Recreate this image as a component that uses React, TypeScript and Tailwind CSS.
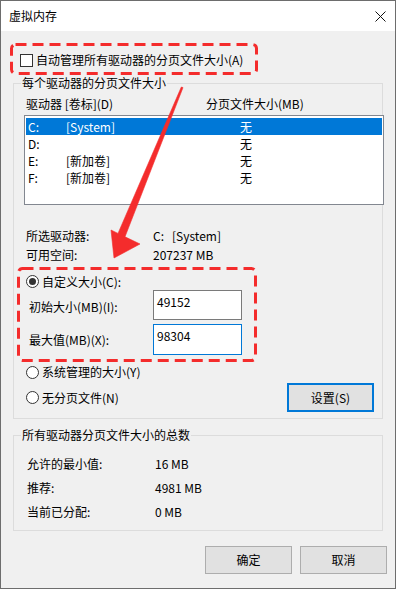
import React from 'react'

const drives = [
  { letter: 'C:', label: '[System]', size: '无', selected: true },
  { letter: 'D:', label: '', size: '无', selected: false },
  { letter: 'E:', label: '[新加卷]', size: '无', selected: false },
  { letter: 'F:', label: '[新加卷]', size: '无', selected: false },
]

function Radio({ checked }: { checked?: boolean }) {
  return (
    <span className="flex h-[13px] w-[13px] shrink-0 items-center justify-center rounded-full border border-[#333] bg-white">
      {checked && <span className="h-[7px] w-[7px] rounded-full bg-[#333]" />}
    </span>
  )
}

function Button({ children, focused }: { children: React.ReactNode; focused?: boolean }) {
  return (
    <div
      className={
        focused
          ? 'flex h-[29px] w-[87px] items-center justify-center border-2 border-[#0078d7] bg-[#e1e1e1]'
          : 'flex h-[28px] w-[87px] items-center justify-center border border-[#adadad] bg-[#e1e1e1]'
      }
    >
      {children}
    </div>
  )
}

function Annotations() {
  // red marks drawn over the dialog
  return (
    <svg className="pointer-events-none absolute left-0 top-0" width="396" height="589">
      <rect x="10.5" y="43.5" width="245" height="29" rx="4" fill="none" stroke="#f42c2c" strokeWidth="3" strokeDasharray="11 6" />
      <rect x="17.5" y="267.5" width="237" height="92" rx="4" fill="none" stroke="#f42c2c" strokeWidth="3" strokeDasharray="11 6" />
      <polygon
        points="180.3,86 182,86.6 124,235.8 139,243 113,257 110,229 117,232.4"
        fill="#f42c2c"
        strokeLinejoin="round"
        stroke="#f42c2c"
        strokeWidth="0.6"
      />
    </svg>
  )
}

export default function App() {
  return (
    <div className="relative h-[589px] w-[396px] overflow-hidden border border-[#6d6d6d] bg-[#f0f0f0] font-['Noto_Sans_CJK_SC',sans-serif] text-[12px] leading-[16px] text-black">
      {/* title bar */}
      <div className="flex h-[30px] items-center justify-between bg-white pl-[8px] pr-[9px]">
        <span>虚拟内存</span>
        <svg width="11" height="11" viewBox="0 0 11 11">
          <path d="M0.5 0.5 L10.5 10.5 M10.5 0.5 L0.5 10.5" stroke="#111" strokeWidth="1" />
        </svg>
      </div>

      {/* auto manage checkbox */}
      <div className="ml-[19px] mt-[19px] flex h-[20px] items-center gap-[3px]">
        <span className="h-[13px] w-[13px] border border-[#333] bg-white" />
        <span>自动管理所有驱动器的分页文件大小(A)</span>
      </div>

      {/* per-drive group */}
      <div className="relative ml-[12px] mt-[13px] h-[336px] w-[370px] border border-[#dcdcdc]">
        <span className="absolute -top-[9px] left-[7px] bg-[#f0f0f0] px-[1px]">每个驱动器的分页文件大小</span>

        <div className="mt-[12px] flex h-[16px] pl-[12px]">
          <span className="w-[180px]">驱动器 [卷标](D)</span>
          <span>分页文件大小(MB)</span>
        </div>

        <div className="ml-[10px] mt-[3px] h-[90px] w-[360px] border border-[#828790] bg-white px-[1px] pt-[2px]">
          {drives.map((d) => (
            <div
              key={d.letter}
              className={
                d.selected
                  ? 'flex h-[17px] items-center bg-[#0078d7] pl-[2px] text-white'
                  : 'flex h-[17px] items-center pl-[2px]'
              }
            >
              <span className="w-[38px]">{d.letter}</span>
              <span className="w-[174px]">{d.label}</span>
              <span>{d.size}</span>
            </div>
          ))}
        </div>

        <div className="mt-[21px] flex h-[19px] items-center pl-[12px]">
          <span className="w-[127px]">所选驱动器:</span>
          <span>C:&nbsp;&nbsp;&nbsp;[System]</span>
        </div>
        <div className="flex h-[19px] items-center pl-[12px]">
          <span className="w-[127px]">可用空间:</span>
          <span>207237 MB</span>
        </div>

        <div className="mt-[9px] flex h-[17px] items-center gap-[3px] pl-[12px]">
          <Radio checked />
          <span>自定义大小(C):</span>
        </div>

        <div className="flex h-[30px] items-center pl-[15px]">
          <span className="w-[124px] pt-[3px]">初始大小(MB)(I):</span>
          <div className="h-[30px] w-[89px] border border-[#7a7a7a] bg-white pl-[3px] pt-[3px]">49152</div>
        </div>
        <div className="mt-[4px] flex h-[31px] items-center pl-[15px]">
          <span className="w-[124px]">最大值(MB)(X):</span>
          <div className="h-[31px] w-[89px] border border-[#0078d7] bg-white pl-[3px] pt-[3px]">98304</div>
        </div>

        <div className="mt-[8px] flex h-[18px] items-center gap-[3px] pl-[12px]">
          <Radio />
          <span>系统管理的大小(Y)</span>
        </div>

        <div className="mt-[2px] flex h-[29px] items-center justify-between pl-[12px] pr-[8px]">
          <div className="flex items-center gap-[3px]">
            <Radio />
            <span>无分页文件(N)</span>
          </div>
          <Button focused>设置(S)</Button>
        </div>
      </div>

      {/* totals group */}
      <div className="relative ml-[12px] mt-[16px] h-[96px] w-[370px] border border-[#dcdcdc]">
        <span className="absolute -top-[9px] left-[7px] bg-[#f0f0f0] px-[1px]">所有驱动器分页文件大小的总数</span>
        <div className="pt-[16px]">
          {[
            ['允许的最小值:', '16 MB'],
            ['推荐:', '4981 MB'],
            ['当前已分配:', '0 MB'],
          ].map(([k, v]) => (
            <div key={k} className="flex h-[24px] items-center pl-[13px]">
              <span className="w-[128px]">{k}</span>
              <span>{v}</span>
            </div>
          ))}
        </div>
      </div>

      {/* dialog buttons */}
      <div className="mt-[15px] flex justify-end gap-[8px] pr-[8px]">
        <Button>确定</Button>
        <Button>取消</Button>
      </div>

      <Annotations />
    </div>
  )
}
